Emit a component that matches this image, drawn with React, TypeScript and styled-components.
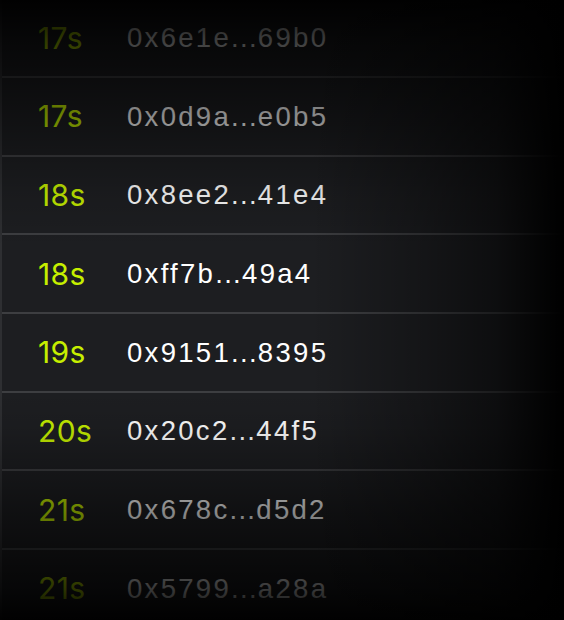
import React from "react";
import styled, { createGlobalStyle } from "styled-components";

const GlobalStyle = createGlobalStyle`
  html, body {
    margin: 0;
    padding: 0;
    background: #000;
  }
  #root {
    width: 564px;
    height: 620px;
  }
`;

const Frame = styled.div`
  position: relative;
  width: 564px;
  height: 620px;
  overflow: hidden;
  background: #000;
`;

const List = styled.div`
  margin-top: -0.67px;
  border-left: 2px solid #2e2f32;
  background: #1d1e21;
`;

const Row = styled.div`
  display: flex;
  align-items: center;
  box-sizing: border-box;
  height: 78.67px;
  padding-left: 36px;
  border-bottom: 2px solid #3d3e41;
  line-height: 1;
`;

const Time = styled.span`
  width: 89px;
  flex: none;
  color: #c6ef00;
  font-family: Inter, "Liberation Sans", sans-serif;
  font-size: 30px;
  letter-spacing: 0.4px;
`;

const Hash = styled.span`
  color: #ffffff;
  font-family: "Liberation Sans", Arial, sans-serif;
  font-size: 27.5px;
  letter-spacing: 2.3px;
`;

const Dots = styled.span`
  letter-spacing: 1.3px;
`;

const Fade = styled.div`
  position: absolute;
  inset: 0;
  pointer-events: none;
  background:
    linear-gradient(
      to right,
      rgba(0, 0, 0, 0) 0%,
      rgba(0, 0, 0, 0) 55%,
      rgba(0, 0, 0, 0.3) 75%,
      rgba(0, 0, 0, 0.55) 88%,
      rgba(0, 0, 0, 0.9) 97%,
      rgba(0, 0, 0, 1) 100%
    ),
    linear-gradient(
      to bottom,
      rgba(0, 0, 0, 0.97) 0%,
      rgba(0, 0, 0, 0.76) 6.5%,
      rgba(0, 0, 0, 0.45) 19%,
      rgba(0, 0, 0, 0.13) 31%,
      rgba(0, 0, 0, 0) 40%,
      rgba(0, 0, 0, 0) 63%,
      rgba(0, 0, 0, 0.08) 69%,
      rgba(0, 0, 0, 0.45) 82%,
      rgba(0, 0, 0, 0.78) 95%,
      rgba(0, 0, 0, 0.97) 100%
    );
`;

const rows = [
  { t: "17s", a: "0x6e1e", b: "69b0" },
  { t: "17s", a: "0x0d9a", b: "e0b5" },
  { t: "18s", a: "0x8ee2", b: "41e4" },
  { t: "18s", a: "0xff7b", b: "49a4" },
  { t: "19s", a: "0x9151", b: "8395" },
  { t: "20s", a: "0x20c2", b: "44f5" },
  { t: "21s", a: "0x678c", b: "d5d2" },
  { t: "21s", a: "0x5799", b: "a28a" },
];

export default function App() {
  return (
    <>
      <GlobalStyle />
      <Frame>
        <List>
          {rows.map((r, i) => (
            <Row key={i}>
              <Time>{r.t}</Time>
              <Hash>
                {r.a}
                <Dots>...</Dots>
                {r.b}
              </Hash>
            </Row>
          ))}
        </List>
        <Fade />
      </Frame>
    </>
  );
}
